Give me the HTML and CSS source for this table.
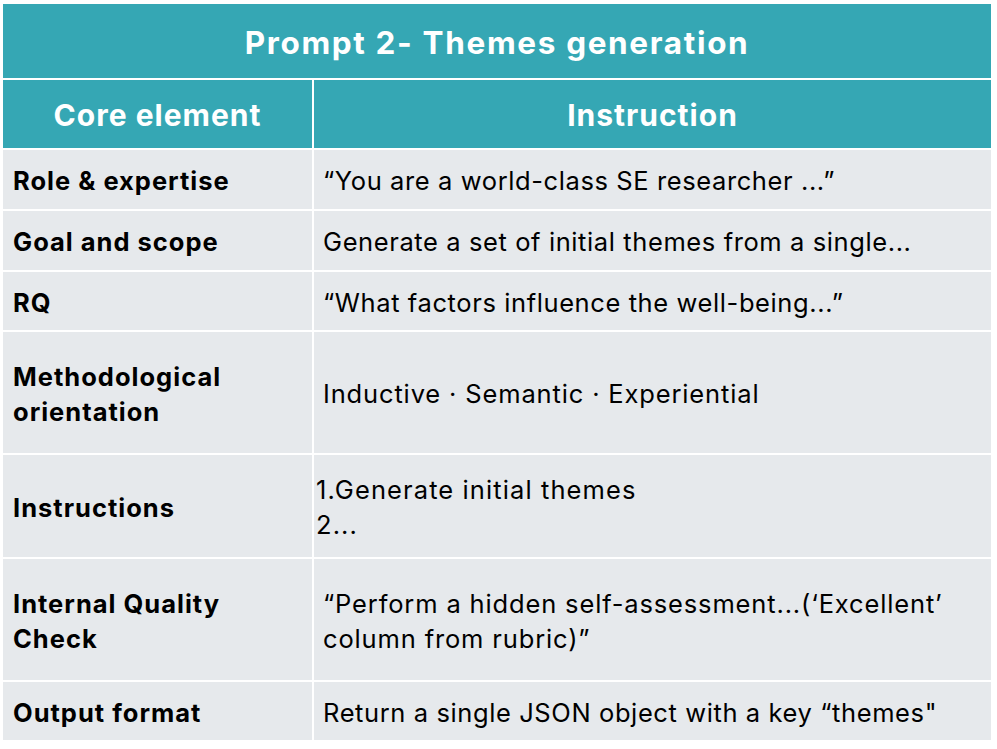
FILE: index.html
```html
<!DOCTYPE html>
<html>
<head>
<meta charset="utf-8">
<link rel="stylesheet" href="styles.css">
</head>
<body>
<div class="tbl">
  <div class="cell title">Prompt 2- Themes generation</div>
  <div class="cell head">Core element</div>
  <div class="cell head">Instruction</div>

  <div class="cell key r1">Role &amp; expertise</div>
  <div class="cell val">“You are a world-class SE researcher ...”</div>

  <div class="cell key">Goal and scope</div>
  <div class="cell val">Generate a set of initial themes from a single...</div>

  <div class="cell key">RQ</div>
  <div class="cell val">“What factors influence the well-being...”</div>

  <div class="cell key">Methodological<br>orientation</div>
  <div class="cell val wide">Inductive · Semantic · Experiential</div>

  <div class="cell key">Instructions</div>
  <div class="cell val list">1.Generate initial themes<br>2...</div>

  <div class="cell key">Internal Quality<br>Check</div>
  <div class="cell val wide">“Perform a hidden self-assessment...(‘Excellent’<br>column from rubric)”</div>

  <div class="cell key">Output format</div>
  <div class="cell val">Return a single JSON object with a key “themes"</div>
</div>
</body>
</html>
```

FILE: styles.css
```css
html, body {
  margin: 0;
  padding: 0;
  background: #ffffff;
}
body {
  padding: 4px 0 0 3px;
  font-family: Inter, "Open Sans", "Liberation Sans", sans-serif;
}
.tbl {
  display: grid;
  width: 988px;
  grid-template-columns: 309px 677px;
  grid-template-rows: 74px 68px 59px 59px 58px 121px 102px 121px 58px;
  gap: 2px;
  background: #ffffff;
}
.cell {
  display: flex;
  align-items: center;
  padding-top: 2px;
  background: #e6e9ec;
  color: #000000;
  font-size: 25.5px;
  line-height: 35px;
  letter-spacing: 0.6px;
}
.title {
  grid-column: 1 / 3;
  justify-content: center;
  padding-top: 2px;
  background: #35a7b4;
  color: #ffffff;
  font-weight: 700;
  font-size: 31.5px;
  letter-spacing: 1.65px;
}
.head {
  justify-content: center;
  background: #35a7b4;
  color: #ffffff;
  font-weight: 700;
  font-size: 30px;
  letter-spacing: 1px;
}
.key {
  font-weight: 700;
  padding-left: 10px;
  letter-spacing: 1px;
}
.val {
  padding-left: 9px;
}
.wide {
  letter-spacing: 0.85px;
}
.list {
  padding-left: 2px;
  letter-spacing: 1.1px;
}
```
